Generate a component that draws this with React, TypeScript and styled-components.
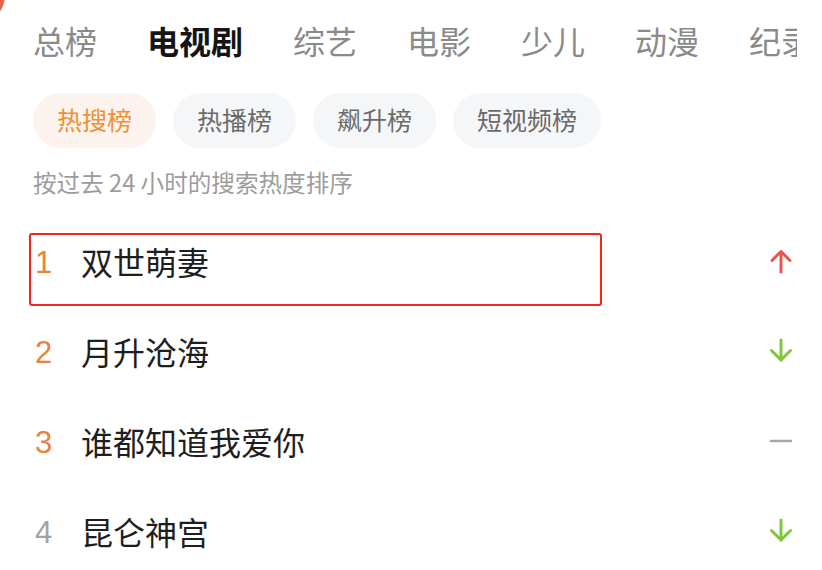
import React from "react";
import styled, { createGlobalStyle } from "styled-components";

const Global = createGlobalStyle`
  html, body { margin: 0; padding: 0; background: #ffffff; }
  body { font-family: "Noto Sans CJK SC", "Noto Sans", sans-serif; }
  * { box-sizing: border-box; }
`;

const Page = styled.div`
  position: relative;
  width: 822px;
  height: 570px;
  overflow: hidden;
  background: #ffffff;
`;

const CornerBlob = styled.div`
  position: absolute;
  left: -55px;
  top: -35px;
  width: 60px;
  height: 60px;
  border-radius: 50%;
  background: #e2664f;
`;

const Tabs = styled.nav`
  display: flex;
  gap: 50px;
  width: 797px;
  height: 84px;
  padding-left: 33px;
  overflow: hidden;
  white-space: nowrap;
`;

const Tab = styled.span<{ $active?: boolean }>`
  flex: none;
  font-size: 32px;
  line-height: 80px;
  font-weight: ${(p) => (p.$active ? 700 : 400)};
  color: ${(p) => (p.$active ? "#151515" : "#8a8a8a")};
`;

const Chips = styled.div`
  display: flex;
  gap: 17px;
  padding-left: 33px;
  margin-top: 9px;
`;

const Chip = styled.span<{ $active?: boolean }>`
  flex: none;
  height: 55px;
  padding: 0 24px;
  border-radius: 28px;
  font-size: 25px;
  line-height: 53px;
  background: ${(p) => (p.$active ? "#fdf3ee" : "#f5f6f7")};
  color: ${(p) => (p.$active ? "#f0902e" : "#6a6a6a")};
`;

const Hint = styled.p`
  margin: 20px 0 0;
  padding-left: 33px;
  font-size: 23.6px;
  line-height: 28px;
  color: #9c9c9c;
`;

const List = styled.ol`
  list-style: none;
  margin: 20px 0 0;
  padding: 0;
`;

const Row = styled.li`
  position: relative;
  display: flex;
  align-items: center;
  height: 90px;
  padding-left: 35px;
  padding-right: 27px;
`;

const Rank = styled.span<{ $hot?: boolean }>`
  flex: none;
  width: 46px;
  padding-top: 4px;
  font-family: "Liberation Sans", Arial, sans-serif;
  font-size: 31px;
  line-height: 36px;
  color: ${(p) => (p.$hot ? "#e8823c" : "#a2a2a2")};
`;

const Title = styled.span`
  flex: 1;
  font-size: 32px;
  line-height: 40px;
  color: #1e1e1e;
`;

const Highlight = styled.div`
  position: absolute;
  left: 29px;
  top: 17px;
  width: 573px;
  height: 73px;
  border: 2.5px solid #f5261c;
  border-radius: 3px;
  pointer-events: none;
`;

const TrendIcon = styled.svg`
  flex: none;
  width: 28px;
  height: 28px;
  display: block;
`;

type Trend = "up" | "down" | "flat";

function TrendMark({ trend }: { trend: Trend }) {
  if (trend === "up") {
    return (
      <TrendIcon viewBox="0 0 28 28" fill="none" stroke="#ea564b" strokeWidth="3" strokeLinecap="round" strokeLinejoin="round">
        <path d="M14 25V5" />
        <path d="M5 13.5L14 4.5L23 13.5" />
      </TrendIcon>
    );
  }
  if (trend === "down") {
    return (
      <TrendIcon viewBox="0 0 28 28" fill="none" stroke="#7cc83a" strokeWidth="3" strokeLinecap="round" strokeLinejoin="round">
        <path d="M14 3V23" />
        <path d="M4.5 13.5L14 23L23.5 13.5" />
      </TrendIcon>
    );
  }
  return (
    <TrendIcon viewBox="0 0 28 28" fill="none" stroke="#a8a8a8" strokeWidth="2.5" strokeLinecap="round">
      <path d="M4 14H24" />
    </TrendIcon>
  );
}

const tabs = ["总榜", "电视剧", "综艺", "电影", "少儿", "动漫", "纪录片"];
const chips = ["热搜榜", "热播榜", "飙升榜", "短视频榜"];
const items: { rank: number; title: string; trend: Trend }[] = [
  { rank: 1, title: "双世萌妻", trend: "up" },
  { rank: 2, title: "月升沧海", trend: "down" },
  { rank: 3, title: "谁都知道我爱你", trend: "flat" },
  { rank: 4, title: "昆仑神宫", trend: "down" },
];

export default function App() {
  return (
    <Page>
      <Global />
      <CornerBlob />
      <Tabs>
        {tabs.map((t) => (
          <Tab key={t} $active={t === "电视剧"}>
            {t}
          </Tab>
        ))}
      </Tabs>
      <Chips>
        {chips.map((c, i) => (
          <Chip key={c} $active={i === 0}>
            {c}
          </Chip>
        ))}
      </Chips>
      <Hint>按过去 24 小时的搜索热度排序</Hint>
      <List>
        {items.map((it) => (
          <Row key={it.rank}>
            <Rank $hot={it.rank <= 3}>{it.rank}</Rank>
            <Title>{it.title}</Title>
            <TrendMark trend={it.trend} />
            {it.rank === 1 && <Highlight />}
          </Row>
        ))}
      </List>
    </Page>
  );
}
